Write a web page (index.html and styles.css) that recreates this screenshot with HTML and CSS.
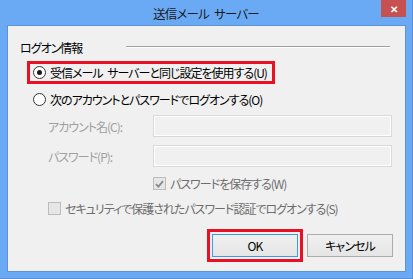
FILE: index.html
```html
<!DOCTYPE html>
<html lang="ja">
<head>
    <meta charset="UTF-8">
    <title>送信メール サーバー</title>
    <link rel="stylesheet" href="styles.css">
</head>
<body>
    <div class="window">
        <div class="titlebar">
            <span></span>
            <span class="title">送信メール サーバー</span>
            <span class="close">&#x2715;</span>
        </div>
        <div class="client">
            <div class="group-head">
                <span>ログオン情報</span>
                <span class="rule"></span>
            </div>

            <label class="radio-row marked">
                <span class="radio checked"></span>
                受信メール サーバーと同じ設定を使用する(U)
            </label>
            <label class="radio-row">
                <span class="radio"></span>
                次のアカウントとパスワードでログオンする(O)
            </label>

            <div class="fields">
                <span class="field-label">アカウント名(C):</span>
                <span class="field-input"></span>
                <span class="field-label">パスワード(P):</span>
                <span class="field-input"></span>
            </div>

            <label class="check-row save-pass">
                <span class="check checked">
                    <svg width="9" height="8" viewBox="0 0 9 8"><path d="M1 4.2 L3.4 6.6 L8 1.2" fill="none" stroke="#8a8a8a" stroke-width="1.8"/></svg>
                </span>
                パスワードを保存する(W)
            </label>
            <label class="check-row spa">
                <span class="check"></span>
                セキュリティで保護されたパスワード認証でログオンする(S)
            </label>

            <div class="buttons">
                <button class="btn default">OK</button>
                <button class="btn">キャンセル</button>
            </div>
        </div>
    </div>
</body>
</html>
```

FILE: styles.css
```css
body {
    margin: 0;
    font-family: "Noto Sans CJK JP", "Noto Sans", sans-serif;
    font-size: 12px;
    font-feature-settings: "palt";
    letter-spacing: -1px;
    word-spacing: 3px;
    color: #000;
}

.window {
    width: 413px;
    height: 279px;
    box-sizing: border-box;
    background: #6aaaf4;
    border-right: 1px solid #5a8fd4;
    border-bottom: 1px solid #5a8fd4;
}

.titlebar {
    height: 25px;
    display: grid;
    grid-template-columns: 1fr auto 1fr;
}

.title {
    line-height: 27px;
    font-size: 12.5px;
    letter-spacing: -0.8px;
    color: #1a1a1a;
}

.close {
    justify-self: end;
    width: 25px;
    height: 17px;
    margin-right: 6px;
    background: #c75050;
    color: #fff;
    font-size: 10px;
    font-weight: bold;
    letter-spacing: 0;
    display: flex;
    align-items: center;
    justify-content: center;
}

.client {
    margin-left: 7px;
    width: 397px;
    height: 245px;
    background: #f0f0f0;
    border: 1px solid #5c92d6;
    display: flex;
    flex-direction: column;
}

.group-head {
    margin: 14px 15px 0 12px;
    height: 14px;
    display: flex;
    align-items: center;
    justify-content: space-between;
}

.rule {
    width: 264px;
    border-top: 1px solid #a0a0a0;
    border-bottom: 1px solid #fff;
}

.radio-row {
    align-self: flex-start;
    margin-left: 19px;
    height: 17px;
    padding: 0 5px 0 3px;
    border: 3px solid transparent;
    display: flex;
    align-items: center;
    gap: 4px;
}

.radio-row.marked {
    margin-top: 7px;
    border-color: #e81123;
}

.radio-row + .radio-row {
    margin-top: 4px;
}

.radio {
    width: 11px;
    height: 11px;
    border: 1px solid #333;
    border-radius: 50%;
    background: #fff;
    display: flex;
    align-items: center;
    justify-content: center;
}

.radio.checked::after {
    content: "";
    width: 5px;
    height: 5px;
    border-radius: 50%;
    background: #1a1a1a;
}

.fields {
    margin: 4px 13px 0 40px;
    display: grid;
    grid-template-columns: 105px 1fr;
    row-gap: 8px;
    align-items: center;
}

.field-label {
    color: #a0a0a0;
}

.field-input {
    height: 20px;
    border: 1px solid #d9d9d9;
    box-shadow: inset 0 0 0 1px #fff;
    background: #f0f0f0;
}

.check-row {
    height: 17px;
    display: flex;
    align-items: center;
    gap: 4px;
    color: #6d6d6d;
}

.check-row.save-pass {
    margin: 8px 0 0 145px;
}

.check-row.spa {
    margin: 8px 0 0 40px;
}

.check {
    width: 11px;
    height: 11px;
    border: 1px solid #bcbcbc;
    background: #e6e6e6;
    display: flex;
    align-items: center;
    justify-content: center;
}

.buttons {
    margin: 17px 12px 0 0;
    display: flex;
    justify-content: flex-end;
    gap: 9px;
}

.btn {
    width: 86px;
    height: 23px;
    padding: 0;
    font-family: inherit;
    font-size: 12px;
    font-feature-settings: "palt";
    letter-spacing: -0.9px;
    color: #000;
    background: linear-gradient(#f0f0f0, #e5e5e5);
    border: 1px solid #acacac;
}

.btn.default {
    border-color: #3c9be8;
    outline: 3px solid #e81123;
    outline-offset: 2px;
}
```
